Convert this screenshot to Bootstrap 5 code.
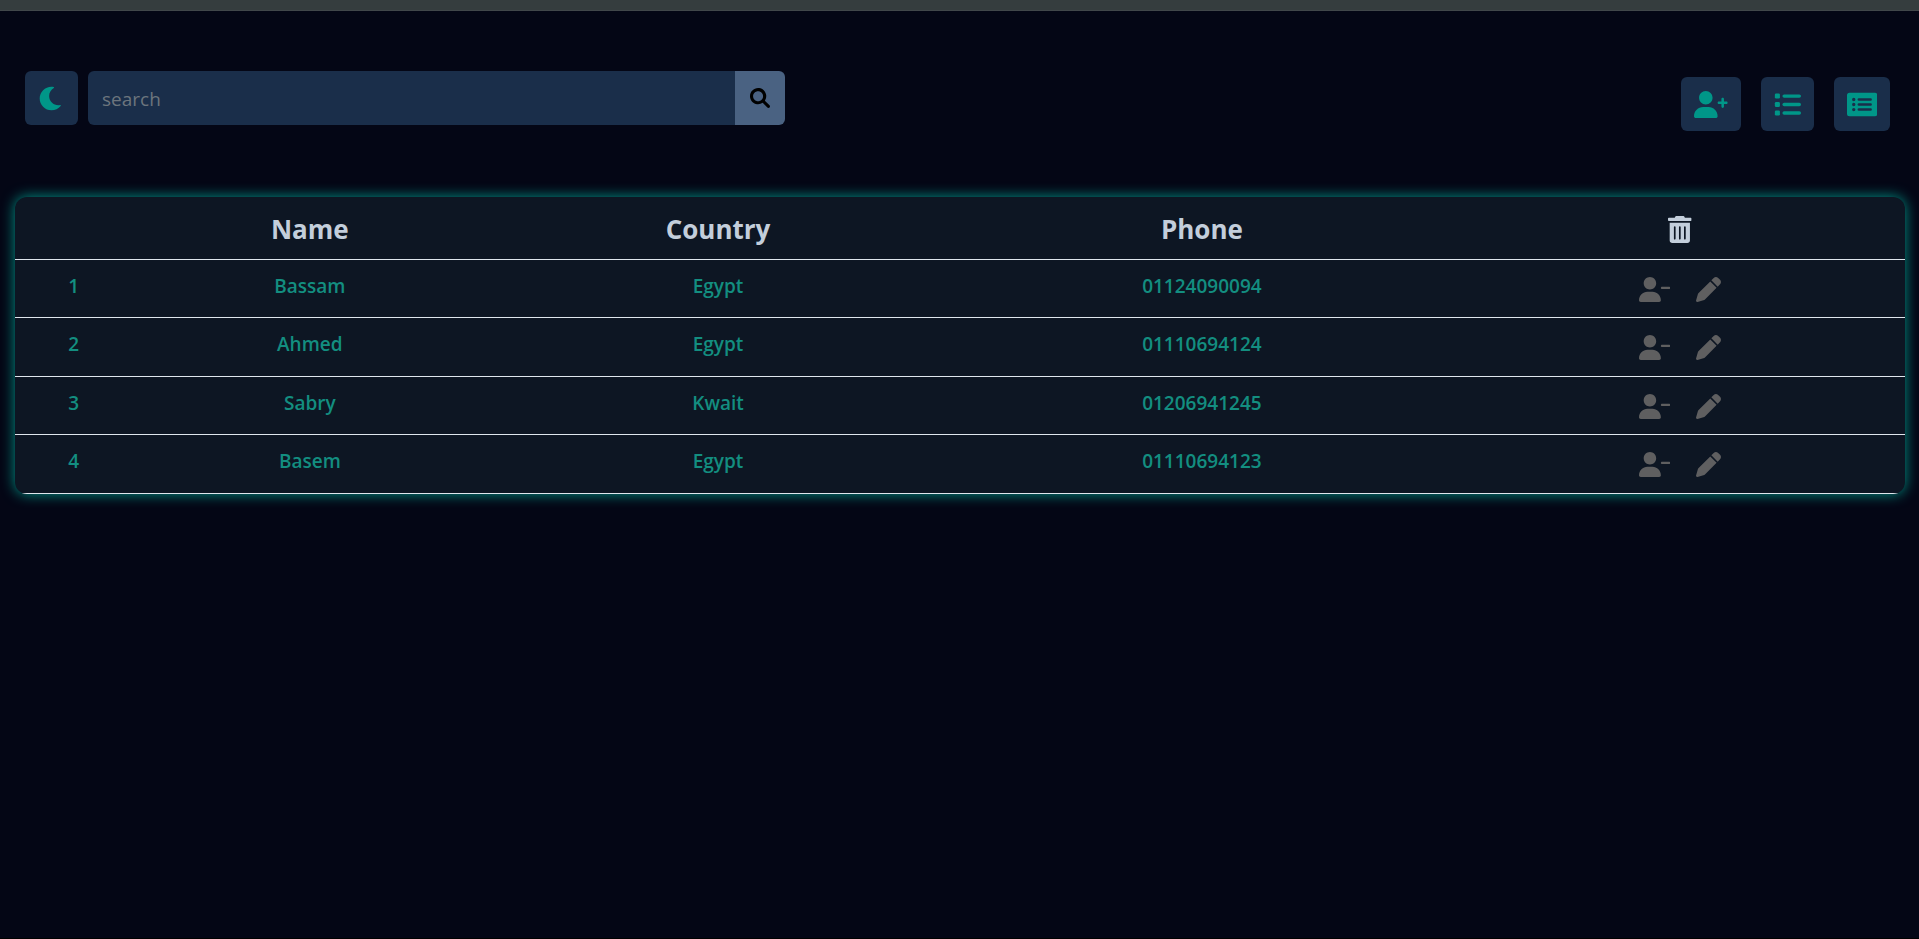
<!DOCTYPE html>
<html lang="en" data-bs-theme="dark">
<head>
<meta charset="utf-8">
<meta name="viewport" content="width=device-width, initial-scale=1">
<title>Contacts</title>
<link href="https://cdn.jsdelivr.net/npm/bootstrap@5.3.0/dist/css/bootstrap.min.css" rel="stylesheet">
<style>
  body { background: #040615; font-family: "Segoe UI", "Open Sans", "Noto Sans", sans-serif; }
  .page { border-top: 10px solid #353d3e; border-bottom: 1px solid #000; }
  .page::before { content: ""; display: block; height: 1px; background: #41474a; }
  .toolbar { padding: 60px 0 66px; }
  .search-side { padding-left: 25px; padding-right: 15px; gap: 10px; }
  .action-side { padding-top: 6px; padding-right: 29px; gap: 20px; }
  .tool-btn { height: 54px; padding: 0 13px; background: #1a2e4a; color: #009688; border: 0; border-radius: 6px; }
  .tool-btn:hover, .tool-btn:focus { background: #24405f; color: #009688; }
  .search-box, .search-box:focus { height: 54px; padding: 2px 14px 0; background: #1a2e4a; color: #c6d0dc; border: 0; border-radius: 6px; font-size: 19px; }
  .search-box::placeholder { color: #6c757d; opacity: 1; }
  .search-btn, .search-btn:hover { width: 50px; padding: 0; background: #4a6282; color: #000; border: 0; border-radius: 6px; }
  .icon { display: block; fill: currentColor; height: 27px; width: auto; }
  .icon-search { height: 20px; margin: 0 auto; }
  .panel { margin: 0 14px 0 15px; background: #0d1623; border-radius: 12px; box-shadow: 0 0 14px #009688; overflow: hidden; }
  .contacts { table-layout: fixed; text-align: center; --bs-table-bg: transparent; border-collapse: separate; border-spacing: 0; }
  .contacts th, .contacts td { border-bottom: 1px solid #dfe6ed; }
  .contacts thead th { height: 63px; padding: 2px 0 0; vertical-align: middle; color: #c3cedb; font-size: 26px; font-weight: 700; line-height: 40px; }
  .contacts tbody th, .contacts tbody td { padding: 12px 0 0; color: #138e80; font-size: 19px; font-weight: 600; line-height: 28px; }
  .contacts tbody .tools-cell { padding: 17px 0 15px; }
  .contacts tbody tr:nth-child(even) .tools-cell { padding-bottom: 16px; }
  .contacts .row-btn { padding: 0; border: 0; background: none; color: #5f5f60; }
  .row-btn .icon { height: 25px; }
  .row-tools { gap: 26px; }
  .col-no { width: 6.2%; } .col-name { width: 18.8%; } .col-country { width: 24.4%; } .col-phone { width: 26.8%; }
</style>
</head>
<body>
<svg class="d-none">
  <symbol id="i-moon" viewBox="0 0 512 512"><path d="M32 256c0-123.800 100.300-224 223.800-224c11.360 0 29.700 1.668 40.900 3.746c9.616 1.777 11.750 14.630 3.279 19.440C245 86.500 211.200 144.600 211.200 207.800c0 109.700 99.710 193 208.300 172.300c9.561-1.805 16.280 9.324 10.110 16.950C387.900 448.600 324.800 480 255.800 480C132.100 480 32 379.600 32 256z"/></symbol>
  <symbol id="i-search" viewBox="0 0 512 512"><path d="M500.300 443.700l-119.700-119.700c27.220-40.410 40.650-90.900 33.460-144.700C401.800 87.790 326.800 13.320 235.200 1.723C99.010-15.510-15.510 99.010 1.724 235.200c11.600 91.640 86.080 166.700 177.600 178.900c53.800 7.189 104.300-6.236 144.700-33.460l119.700 119.700c15.620 15.620 40.950 15.620 56.570 0C515.900 484.700 515.900 459.300 500.300 443.700zM79.100 208c0-70.580 57.420-128 128-128s128 57.420 128 128c0 70.580-57.420 128-128 128S79.100 278.600 79.100 208z"/></symbol>
  <symbol id="i-plus" viewBox="0 0 640 512"><path d="M224 256c70.700 0 128-57.310 128-128s-57.300-128-128-128C153.300 0 96 57.310 96 128S153.300 256 224 256zM274.700 304H173.300C77.610 304 0 381.600 0 477.300C0 496.500 15.520 512 34.660 512h378.700C432.500 512 448 496.500 448 477.300C448 381.600 370.400 304 274.700 304zM616 200h-48v-48C568 138.800 557.300 128 544 128s-24 10.750-24 24v48h-48C458.800 200 448 210.800 448 224s10.750 24 24 24h48v48C520 309.300 530.800 320 544 320s24-10.750 24-24v-48h48C629.300 248 640 237.300 640 224S629.300 200 616 200z"/></symbol>
  <symbol id="i-minus" viewBox="0 0 640 512"><path d="M224 256c70.700 0 128-57.310 128-128s-57.300-128-128-128C153.300 0 96 57.310 96 128S153.300 256 224 256zM274.700 304H173.300C77.610 304 0 381.600 0 477.300C0 496.500 15.520 512 34.660 512h378.700C432.500 512 448 496.500 448 477.300C448 381.600 370.400 304 274.700 304zM616 200h-144C458.800 200 448 210.800 448 224s10.750 24 24 24h144C629.300 248 640 237.300 640 224S629.300 200 616 200z"/></symbol>
  <symbol id="i-list" viewBox="0 0 512 512"><rect x="16" y="48" width="96" height="96" rx="24"/><rect x="16" y="208" width="96" height="96" rx="24"/><rect x="16" y="368" width="96" height="96" rx="24"/><rect x="160" y="64" width="352" height="64" rx="32"/><rect x="160" y="224" width="352" height="64" rx="32"/><rect x="160" y="384" width="352" height="64" rx="32"/></symbol>
  <symbol id="i-cards" viewBox="0 0 576 512"><path fill-rule="evenodd" d="M48 32H528A48 48 0 0 1 576 80V432A48 48 0 0 1 528 480H48A48 48 0 0 1 0 432V80A48 48 0 0 1 48 32zM96 160a32 32 0 1 0 64 0a32 32 0 1 0-64 0zM96 256a32 32 0 1 0 64 0a32 32 0 1 0-64 0zM96 352a32 32 0 1 0 64 0a32 32 0 1 0-64 0zM224 136a24 24 0 0 0 0 48H448a24 24 0 0 0 0-48zM224 232a24 24 0 0 0 0 48H448a24 24 0 0 0 0-48zM224 328a24 24 0 0 0 0 48H448a24 24 0 0 0 0-48z"/></symbol>
  <symbol id="i-trash" viewBox="0 0 448 512"><path d="M32 464C32 490.500 53.500 512 80 512h288c26.500 0 48-21.500 48-48V128H32V464zM304 208C304 199.100 311.100 192 320 192s16 7.125 16 16v224c0 8.875-7.125 16-16 16s-16-7.125-16-16V208zM208 208C208 199.100 215.100 192 224 192s16 7.125 16 16v224c0 8.875-7.125 16-16 16s-16-7.125-16-16V208zM112 208C112 199.100 119.100 192 128 192s16 7.125 16 16v224C144 440.900 136.900 448 128 448s-16-7.125-16-16V208zM432 32H320l-11.580-23.160c-2.709-5.420-8.250-8.844-14.310-8.844H153.900c-6.061 0-11.600 3.424-14.310 8.844L128 32H16c-8.836 0-16 7.162-16 16V80c0 8.836 7.164 16 16 16h416c8.838 0 16-7.164 16-16V48C448 39.160 440.800 32 432 32z"/></symbol>
  <symbol id="i-pen" viewBox="0 0 512 512"><path d="M362.700 19.320C387.700-5.678 428.300-5.678 453.300 19.320L492.700 58.750C517.700 83.740 517.700 124.300 492.700 149.300L444.300 197.700L314.300 67.720L362.700 19.320zM421.700 220.300L188.500 453.400C178.100 463.800 165.200 471.500 151.100 475.600L30.770 511C22.350 513.500 13.240 511.200 7.030 504.100C.8198 498.800-1.502 489.700 .976 481.200L36.370 360.900C40.530 346.800 48.160 333.900 58.570 323.500L291.700 90.340L421.700 220.300z"/></symbol>
</svg>
<div class="page min-vh-100">
  <header class="toolbar d-flex align-items-start justify-content-between">
    <div class="search-side col-5 d-flex">
      <button type="button" class="btn tool-btn" aria-label="Dark mode"><svg class="icon" viewBox="0 0 512 512"><use href="#i-moon"/></svg></button>
      <form class="input-group" role="search">
        <input type="search" class="form-control search-box" placeholder="search" aria-label="search">
        <button type="button" class="btn search-btn" aria-label="Run search"><svg class="icon icon-search" viewBox="0 0 512 512"><use href="#i-search"/></svg></button>
      </form>
    </div>
    <div class="action-side d-flex">
      <button type="button" class="btn tool-btn" aria-label="Add contact"><svg class="icon" viewBox="0 0 640 512"><use href="#i-plus"/></svg></button>
      <button type="button" class="btn tool-btn" aria-label="List view"><svg class="icon" viewBox="0 0 512 512"><use href="#i-list"/></svg></button>
      <button type="button" class="btn tool-btn" aria-label="Card view"><svg class="icon" viewBox="0 0 576 512"><use href="#i-cards"/></svg></button>
    </div>
  </header>
  <main class="panel">
    <table class="table contacts mb-0">
      <colgroup><col class="col-no"><col class="col-name"><col class="col-country"><col class="col-phone"><col></colgroup>
      <thead>
        <tr><th></th><th scope="col">Name</th><th scope="col">Country</th><th scope="col">Phone</th><th scope="col" aria-label="Actions"><svg class="icon mx-auto" viewBox="0 0 448 512"><use href="#i-trash"/></svg></th></tr>
      </thead>
      <tbody>
        <tr><th scope="row">1</th><td>Bassam</td><td>Egypt</td><td>01124090094</td><td class="tools-cell"><div class="row-tools d-flex justify-content-center"><button type="button" class="row-btn" aria-label="Remove Bassam"><svg class="icon" viewBox="0 0 640 512"><use href="#i-minus"/></svg></button><button type="button" class="row-btn" aria-label="Edit Bassam"><svg class="icon" viewBox="0 0 512 512"><use href="#i-pen"/></svg></button></div></td></tr>
        <tr><th scope="row">2</th><td>Ahmed</td><td>Egypt</td><td>01110694124</td><td class="tools-cell"><div class="row-tools d-flex justify-content-center"><button type="button" class="row-btn" aria-label="Remove Ahmed"><svg class="icon" viewBox="0 0 640 512"><use href="#i-minus"/></svg></button><button type="button" class="row-btn" aria-label="Edit Ahmed"><svg class="icon" viewBox="0 0 512 512"><use href="#i-pen"/></svg></button></div></td></tr>
        <tr><th scope="row">3</th><td>Sabry</td><td>Kwait</td><td>01206941245</td><td class="tools-cell"><div class="row-tools d-flex justify-content-center"><button type="button" class="row-btn" aria-label="Remove Sabry"><svg class="icon" viewBox="0 0 640 512"><use href="#i-minus"/></svg></button><button type="button" class="row-btn" aria-label="Edit Sabry"><svg class="icon" viewBox="0 0 512 512"><use href="#i-pen"/></svg></button></div></td></tr>
        <tr><th scope="row">4</th><td>Basem</td><td>Egypt</td><td>01110694123</td><td class="tools-cell"><div class="row-tools d-flex justify-content-center"><button type="button" class="row-btn" aria-label="Remove Basem"><svg class="icon" viewBox="0 0 640 512"><use href="#i-minus"/></svg></button><button type="button" class="row-btn" aria-label="Edit Basem"><svg class="icon" viewBox="0 0 512 512"><use href="#i-pen"/></svg></button></div></td></tr>
      </tbody>
    </table>
  </main>
</div>
<script src="https://cdn.jsdelivr.net/npm/bootstrap@5.3.0/dist/js/bootstrap.bundle.min.js"></script>
</body>
</html>
